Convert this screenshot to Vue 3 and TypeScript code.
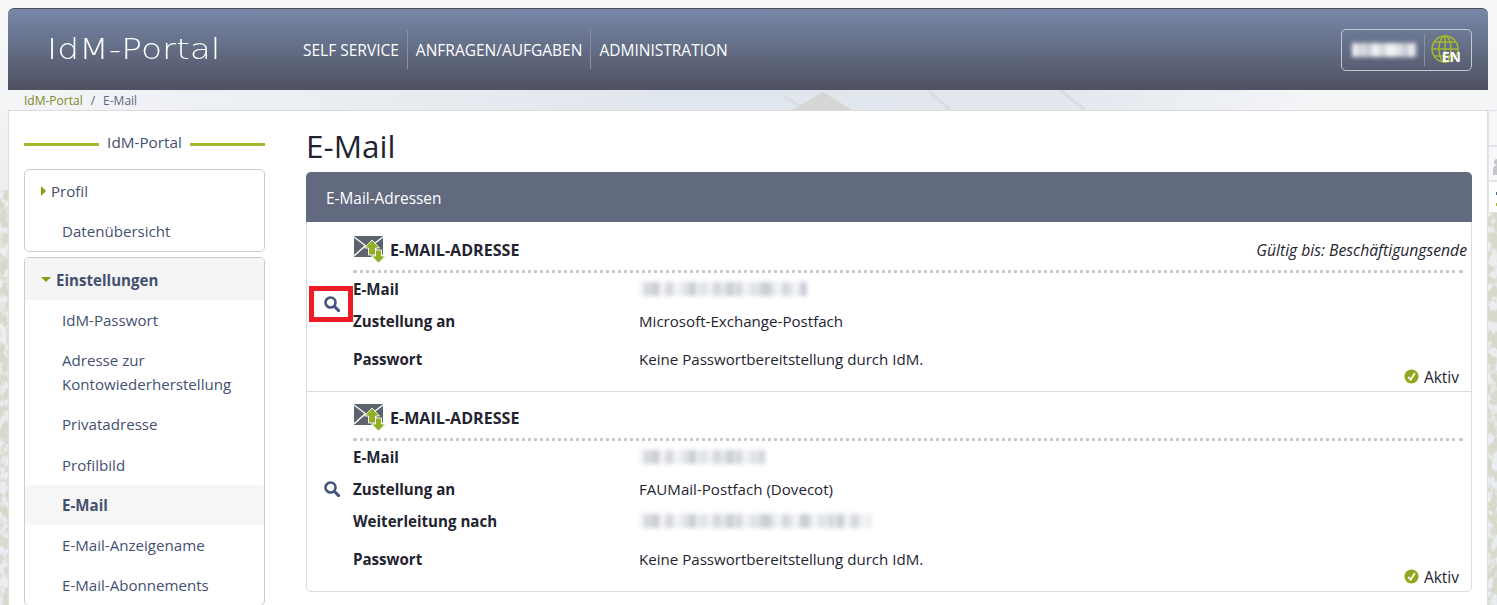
<script setup lang="ts">
interface Field {
  label: string
  value?: string
  blurWidth?: number
}
interface Address {
  validUntil?: string
  highlight: boolean
  fields: Field[]
  password: string
}

const nav = ['SELF SERVICE', 'ANFRAGEN/AUFGABEN', 'ADMINISTRATION']
const settings = [
  { label: 'IdM-Passwort' },
  { label: 'Adresse zur Kontowiederherstellung' },
  { label: 'Privatadresse' },
  { label: 'Profilbild' },
  { label: 'E-Mail', active: true },
  { label: 'E-Mail-Anzeigename' },
  { label: 'E-Mail-Abonnements' }
]
const noPassword = 'Keine Passwortbereitstellung durch IdM.'
const addresses: Address[] = [
  {
    validUntil: 'Gültig bis: Beschäftigungsende',
    highlight: true,
    fields: [
      { label: 'E-Mail', blurWidth: 168 },
      { label: 'Zustellung an', value: 'Microsoft-Exchange-Postfach' }
    ],
    password: noPassword
  },
  {
    highlight: false,
    fields: [
      { label: 'E-Mail', blurWidth: 126 },
      { label: 'Zustellung an', value: 'FAUMail-Postfach (Dovecot)' },
      { label: 'Weiterleitung nach', blurWidth: 232 }
    ],
    password: noPassword
  }
]
</script>

<template>
  <div class="page">
    <svg class="backdrop" width="1497" height="605" aria-hidden="true">
      <defs>
        <filter id="foliage" x="0" y="0" width="100%" height="100%">
          <feTurbulence type="fractalNoise" baseFrequency="0.12 0.09" numOctaves="3" seed="7" />
          <feColorMatrix values="0 0 0 0 0.68  0 0 0 0 0.7  0 0 0 0 0.6  5.5 0 0 0 -2.1" />
        </filter>
        <linearGradient id="band" x1="0" x2="1" y1="0" y2="0">
          <stop offset="0" stop-color="#f4f5f7" />
          <stop offset="0.45" stop-color="#e0e6ed" />
          <stop offset="0.7" stop-color="#e2e7ee" />
          <stop offset="0.88" stop-color="#f4f5f7" />
        </linearGradient>
      </defs>
      <rect x="0" y="90" width="1497" height="20" fill="url(#band)" />
      <rect x="0" y="190" width="8" height="415" filter="url(#foliage)" />
      <rect x="1488" y="212" width="9" height="393" filter="url(#foliage)" />
      <rect x="1488.5" y="110.5" width="9" height="35" fill="#f7f8f9" stroke="#e2e3e6" />
      <rect x="1488.5" y="146.5" width="9" height="34" fill="#f7f8f9" stroke="#e2e3e6" />
      <rect x="1488.5" y="181.5" width="9" height="31" fill="#fff" stroke="#e2e3e6" />
      <path d="M1493 175v-6q0-3 4-4v10z" fill="#c4c6cb" />
      <circle cx="1497" cy="162" r="3" fill="#c4c6cb" />
      <rect x="1496" y="192" width="1" height="3" fill="#5c6580" />
      <rect x="1496" y="203" width="1" height="3" fill="#a5b92d" />
      <path d="M792 110 L823 92 L852 110 Z" fill="#d6d6d4" />
      <path d="M784 96 L800 106 M930 92 L950 110 M1060 90 L1085 110" stroke="#d9dde3" stroke-width="3" />
    </svg>

    <header class="topbar">
      <div class="logo-slot"><div class="logo">IdM-Portal</div></div>
      <nav class="main-nav">
        <a v-for="item in nav" :key="item" class="nav-link">{{ item }}</a>
      </nav>
      <div class="user-box">
        <div class="pixels user-pixels"></div>
        <svg class="globe" viewBox="0 0 34 32" width="34" height="32">
          <g fill="none" stroke="#a5b92d" stroke-width="1.5">
            <circle cx="15" cy="15" r="13" />
            <ellipse cx="15" cy="15" rx="6" ry="13" />
            <path d="M15 2v26M2 15h26M4 8h22M4 22h22" />
          </g>
        </svg>
        <span class="lang">EN</span>
      </div>
    </header>

    <div class="breadcrumb">
      <a>IdM-Portal</a>
      <span class="sep">/</span>
      <span class="current">E-Mail</span>
    </div>

    <div class="content">
      <aside class="sidebar">
        <div class="side-title"><span>IdM-Portal</span></div>

        <div class="menu">
          <div class="menu-head"><i class="caret-right"></i>Profil</div>
          <div class="menu-item">Datenübersicht</div>
        </div>

        <div class="menu">
          <div class="menu-head open"><i class="caret-down"></i>Einstellungen</div>
          <div
            v-for="item in settings"
            :key="item.label"
            class="menu-item"
            :class="{ active: item.active }"
          >
            {{ item.label }}
          </div>
        </div>
      </aside>

      <main class="main">
        <h1>E-Mail</h1>
        <section class="panel">
          <div class="panel-head">E-Mail-Adressen</div>

          <article
            v-for="(address, i) in addresses"
            :key="i"
            class="address"
            :class="{ highlighted: address.highlight }"
          >
            <div class="address-head">
              <svg class="mail-icon" viewBox="0 0 32 28" width="32" height="28">
                <path d="M0 1h29v21H0z" fill="#5d626f" />
                <path d="M0 2l14.5 11L29 2M0 21l11-10M29 21L18 11" fill="none" stroke="#fff" stroke-width="1.3" />
                <path d="M18 5l7.5 8h-4v7h-7v-7h-4z" fill="#8fb021" stroke="#fff" stroke-width=".9" />
                <path d="M21.5 15h6v6h4l-7 7-7-7h4z" fill="#8fb021" stroke="#fff" stroke-width=".9" />
              </svg>
              <h2>E-MAIL-ADRESSE</h2>
              <em v-if="address.validUntil">{{ address.validUntil }}</em>
            </div>

            <div class="field-group">
              <div class="search-slot">
                <svg viewBox="0 0 16 16" width="16" height="16">
                  <circle cx="6.5" cy="6.5" r="5" fill="none" stroke="#46557c" stroke-width="2.6" />
                  <path d="M10.3 10.3L14.6 14.6" stroke="#46557c" stroke-width="3" stroke-linecap="round" />
                </svg>
                <span v-if="address.highlight" class="red-box"></span>
              </div>
              <div v-for="field in address.fields" :key="field.label" class="field">
                <strong>{{ field.label }}</strong>
                <span v-if="field.value">{{ field.value }}</span>
                <div v-else class="pixels" :style="{ width: field.blurWidth + 'px' }"></div>
              </div>
            </div>

            <div class="field tall">
              <strong>Passwort</strong>
              <span>{{ address.password }}</span>
            </div>

            <div class="status">
              <svg viewBox="0 0 16 16" width="15" height="15">
                <circle cx="8" cy="8" r="7.5" fill="#8fa91f" />
                <path d="M4.5 8.5l2.6 3L11.5 4.5" fill="none" stroke="#fff" stroke-width="2" />
              </svg>
              Aktiv
            </div>
          </article>
        </section>
      </main>
    </div>
  </div>
</template>

<style>
html,
body {
  margin: 0;
  overflow: hidden;
}
</style>

<style scoped>
.page {
  position: relative;
  box-sizing: border-box;
  width: 1497px;
  height: 605px;
  padding: 8px 9px 0 8px;
  overflow: hidden;
  background: linear-gradient(180deg, #f8f8f9 0, #f3f4f6 90px, #eceef2 190px, #e9ecf1 605px);
  font-family: "Open Sans", "Liberation Sans", sans-serif;
  color: #1f2430;
}

.backdrop {
  position: absolute;
  inset: 0;
}

.topbar {
  position: relative;
  display: flex;
  align-items: center;
  height: 82px;
  box-sizing: border-box;
  padding: 0 16px 0 39px;
  border-top: 1px solid #4b4f5a;
  border-radius: 6px 6px 0 0;
  background: linear-gradient(180deg, #7788a8 0, #4f5161 100%);
  color: #fff;
}

.logo-slot {
  flex: 0 0 248px;
}

/* the original logo face is a wide squared one, so stretch the nearest installed font */
.logo {
  display: inline-block;
  font-family: "DejaVu Sans", sans-serif;
  font-size: 29px;
  font-weight: 200;
  line-height: 1;
  transform: scaleX(1.19);
  transform-origin: left center;
}

.main-nav {
  display: flex;
  align-items: center;
}

.nav-link {
  display: flex;
  align-items: center;
  height: 39px;
  padding: 0 8px;
  font-size: 15.5px;
  border-left: 1px solid #8a90a0;
}

.nav-link:first-child {
  border-left: none;
}

.user-box {
  position: relative;
  display: flex;
  align-items: center;
  box-sizing: border-box;
  width: 131px;
  height: 42px;
  margin-left: auto;
  padding-left: 10px;
  border: 1px solid #c6c9d2;
  border-radius: 5px;
}

.user-pixels {
  width: 64px;
  height: 10px;
  margin-right: 8px;
}

.globe {
  padding-left: 5px;
  border-left: 1px solid #8a90a0;
}

.lang {
  position: absolute;
  right: 10px;
  bottom: 6px;
  font-size: 14px;
  font-weight: 700;
  line-height: 1;
}

.breadcrumb {
  position: relative;
  display: flex;
  align-items: center;
  height: 20px;
  box-sizing: border-box;
  padding-left: 16px;
  font-size: 12px;
  color: #5c6580;
}

.breadcrumb a {
  color: #7d8a1e;
}

.sep {
  margin: 0 8px;
}

.content {
  position: relative;
  display: flex;
  box-sizing: border-box;
  height: 520px;
  padding: 0 15px;
  background: #fff;
  border: 1px solid #dcdcdc;
}

.sidebar {
  flex: 0 0 241px;
  margin-right: 41px;
}

.side-title {
  display: flex;
  align-items: center;
  gap: 8px;
  height: 58px;
  box-sizing: border-box;
  padding-top: 4px;
  color: #44506f;
  font-size: 15.3px;
}

.side-title::before,
.side-title::after {
  content: "";
  flex: 1;
  height: 3px;
  margin-top: 5px;
  background: #a5b92d;
}

.menu {
  margin-bottom: 5px;
  border: 1px solid #cccccc;
  border-radius: 5px;
  font-size: 15.1px;
  color: #44506f;
}

.menu-head,
.menu-item {
  display: flex;
  align-items: center;
  box-sizing: border-box;
}

.menu-head {
  height: 41px;
  padding: 1px 0 0 16px;
}

.menu-head.open {
  height: 42px;
  background: #f5f5f5;
  font-weight: 700;
  border-radius: 4px 4px 0 0;
}

.menu-item {
  min-height: 40.2px;
  padding: 8px 20px;
  padding-left: 37px;
  line-height: 24px;
}

.menu-item.active {
  background: #f6f6f6;
  font-weight: 700;
  border-radius: 4px;
}

.caret-right {
  width: 0;
  height: 0;
  margin-right: 5px;
  border-left: 5px solid #8a9a13;
  border-top: 5px solid transparent;
  border-bottom: 5px solid transparent;
}

.caret-down {
  width: 0;
  height: 0;
  margin-right: 5px;
  border-top: 5px solid #8a9a13;
  border-left: 5px solid transparent;
  border-right: 5px solid transparent;
}

.main {
  flex: 1;
  min-width: 0;
}

h1 {
  margin: 0;
  height: 61px;
  box-sizing: border-box;
  padding-top: 14px;
  font-size: 31.5px;
  font-weight: 400;
  line-height: 42px;
  color: #1f2430;
}

.panel {
  border: 1px solid #dcdcdc;
  border-radius: 5px;
}

.panel-head {
  display: flex;
  align-items: center;
  height: 50px;
  box-sizing: border-box;
  padding: 2px 0 0 20px;
  margin: -1px -1px 0;
  background: #626a80;
  border-radius: 5px 5px 0 0;
  color: #fff;
  font-size: 15.4px;
}

.address {
  position: relative;
  padding: 0 8px 0 46px;
  border-bottom: 1px solid #dcdcdc;
  font-size: 15.1px;
}

.address.highlighted {
  padding-top: 2px;
}

.address:last-child {
  border-bottom: none;
}

.address-head {
  display: flex;
  align-items: center;
  gap: 4px;
  height: 49px;
  border-bottom: 3px dotted #cbcbcb;
  padding-top: 5px;
  box-sizing: border-box;
}

.mail-icon {
  margin: -2px 0 0 1px;
}

h2 {
  margin: 0;
  font-size: 16.1px;
  font-weight: 700;
}

.address-head em {
  margin: 0 -4px 0 auto;
  font-size: 15.7px;
}

.field-group {
  position: relative;
}

.field {
  display: flex;
  align-items: center;
  height: 32px;
}

.field.tall {
  height: 44px;
}

.field strong {
  flex: 0 0 286px;
}

.search-slot {
  position: absolute;
  left: -29px;
  top: 50%;
  width: 16px;
  height: 16px;
  margin-top: -8px;
}

.highlighted .search-slot {
  margin-top: -9px;
}

.red-box {
  position: absolute;
  left: -15px;
  top: -10px;
  width: 44px;
  height: 36px;
  box-sizing: border-box;
  border: 5px solid #ed1c24;
}

.status {
  display: flex;
  justify-content: flex-end;
  align-items: center;
  gap: 5px;
  height: 23px;
  padding: 0 4px 3px 0;
  margin-top: -16px;
  font-size: 15.5px;
}

.pixels {
  height: 14px;
  background-color: #e9eaec;
  background-image:
    repeating-linear-gradient(90deg, transparent 0 13px, #c9ccd6 13px 20px, transparent 20px 37px),
    repeating-linear-gradient(90deg, transparent 0 5px, #d4d6dc 5px 11px, transparent 11px 23px),
    repeating-linear-gradient(90deg, #f2f3f4 0 9px, #dfe3e6 9px 17px);
  filter: blur(2.2px);
}
</style>
